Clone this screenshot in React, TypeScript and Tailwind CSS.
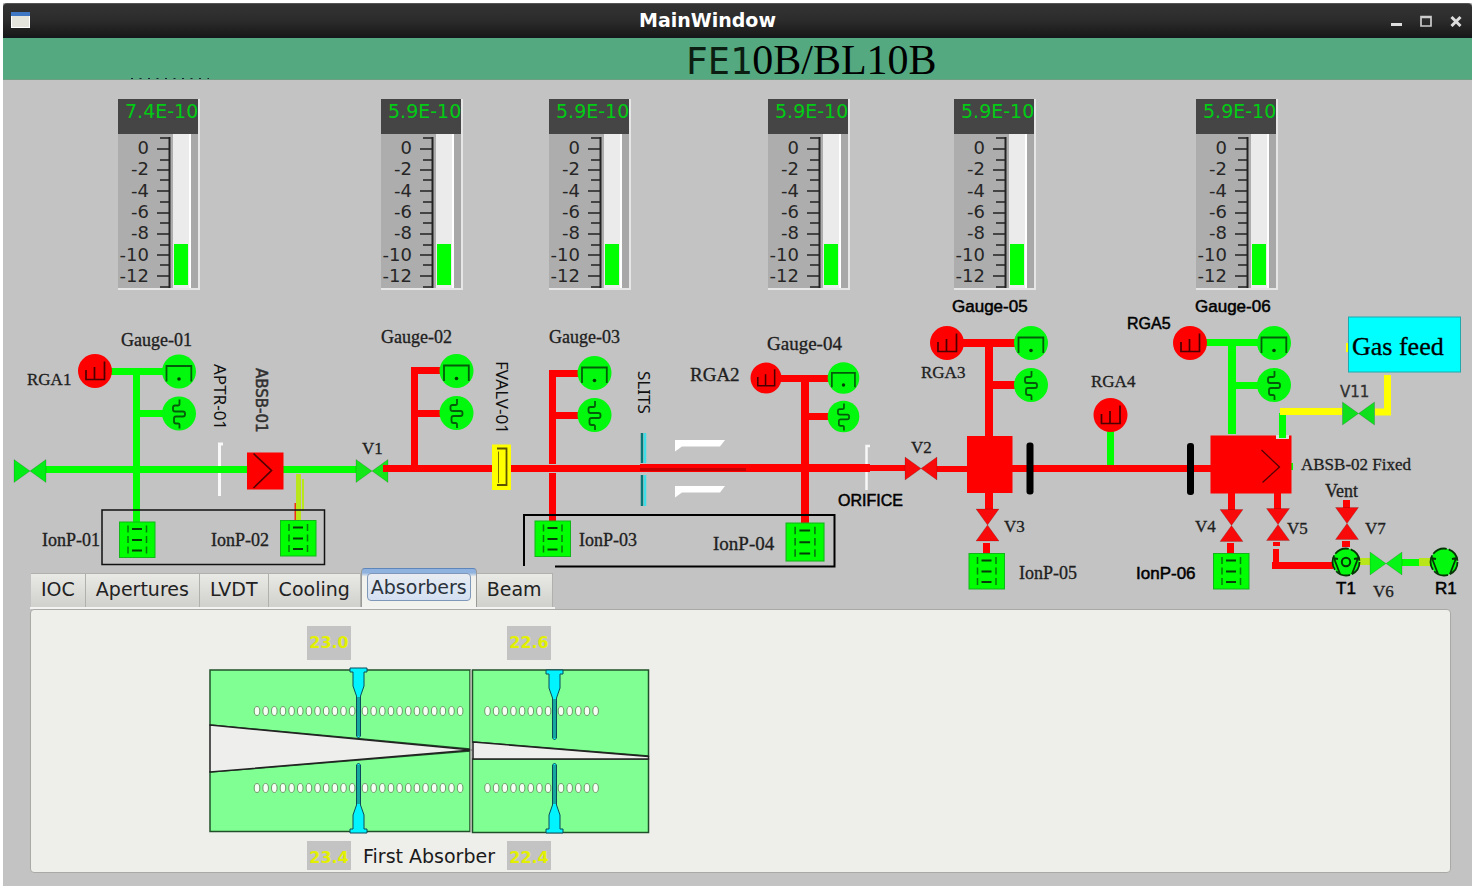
import { useState } from "react";

const RED = "#ff0000";
const GREEN = "#00ff00";
const YELLOW = "#ffff00";
const LIME = "#b9e61a";

const gauges = [
  { id: "Gauge-01", value: "7.4E-10", place: "left-[115px]" },
  { id: "Gauge-02", value: "5.9E-10", place: "left-[378px]" },
  { id: "Gauge-03", value: "5.9E-10", place: "left-[546px]" },
  { id: "Gauge-04", value: "5.9E-10", place: "left-[765px]" },
  { id: "Gauge-05", value: "5.9E-10", place: "left-[951px]" },
  { id: "Gauge-06", value: "5.9E-10", place: "left-[1193px]" },
];

const scale = ["0", "-2", "-4", "-6", "-8", "-10", "-12"];
const majorTicks = [15, 36, 57, 79, 100, 121, 142];
const minorTicks = [4, 26, 46, 68, 89, 111, 131, 153];

function Gauge({ value, place }: { value: string; place: string }) {
  return (
    <div className={`absolute top-[19px] w-[82px] border-r-2 border-b-2 border-[#e6e6e6] ${place}`}>
      <div className="h-[35px] bg-[#454545] pl-[7px] text-[19px] leading-[24px] text-[#00cc14] whitespace-nowrap">
        {value}
      </div>
      <div className="flex h-[154px] bg-[#adadad]">
        <div className="flex w-[31px] flex-col justify-between pt-[3px] pb-[2px] text-right text-[18px] leading-[21px] text-[#262626]">
          {scale.map((s) => (
            <span key={s} className="self-end whitespace-nowrap">{s}</span>
          ))}
        </div>
        <svg className="h-[154px] w-[24px] shrink-0" viewBox="0 0 24 154" stroke="#222" strokeWidth="2" fill="none" aria-hidden="true">
          <path d="M20.5 3V154" />
          <path d={majorTicks.map((y) => `M8 ${y}H20`).join("")} strokeWidth="1.7" />
          <path d={minorTicks.map((y) => `M11 ${y}H20`).join("")} strokeWidth="1.7" />
        </svg>
        <div className="flex w-[18px] flex-col justify-end border-r-2 border-white bg-[#ebebeb] px-px pb-[3px]">
          <div className="h-[41px] bg-[#00ff00]" />
        </div>
        <div className="flex-1 bg-[#a8a8a8]" />
      </div>
    </div>
  );
}

function Rga({ x, y, s = 1 }: { x: number; y: number; s?: number }) {
  return (
    <g transform={`translate(${x} ${y}) scale(${s})`}>
      <circle r="17" fill={RED} />
      <path d="M-9 -1V8.500H9.500V-9.500M-.5 -4V8" fill="none" stroke="#4a0000" strokeWidth="1.7" />
    </g>
  );
}

function ColdCathode({ x, y, s = 1 }: { x: number; y: number; s?: number }) {
  return (
    <g transform={`translate(${x} ${y}) scale(${s})`}>
      <circle r="17" fill="#02f80c" />
      <path d="M-12.500 10V-5.500H12.300V10" fill="none" stroke="#045c0a" strokeWidth="1.8" />
      <circle cy="7.500" r="1.800" fill="#033b06" />
    </g>
  );
}

function Pirani({ x, y, s = 1 }: { x: number; y: number; s?: number }) {
  return (
    <g transform={`translate(${x} ${y}) scale(${s})`}>
      <circle r="17" fill="#02f80c" />
      <path
        d="M.5 -14V-9.500Q.5 -8 -1 -8H-4Q-6 -8 -6 -6V-4Q-6 -2 -4 -2H4Q6 -2 6 0V1Q6 3 4 3H-3Q-5 3 -5 5V8Q-5 10 -3 10H-1Q.5 10 .5 11.500V15"
        fill="none"
        stroke="#045c0a"
        strokeWidth="1.8"
      />
    </g>
  );
}

function IonPump({ x, y, s = 1 }: { x: number; y: number; s?: number }) {
  return (
    <g transform={`translate(${x} ${y}) scale(${s})`}>
      <rect x=".5" y=".5" width="35.500" height="35.500" fill={GREEN} stroke="#12b51a" />
      <path d="M13 7.500H23M13 18.500H23M13 29H23" stroke="#053c08" strokeWidth="1.8" />
      <path d="M9 4V32M27.500 4V32" stroke="#077a0d" strokeWidth="1.500" strokeDasharray="7 3.500" />
    </g>
  );
}

function Valve({ x, y, color, upright = false }: { x: number; y: number; color: string; upright?: boolean }) {
  return (
    <g transform={`translate(${x} ${y})${upright ? " rotate(90)" : ""}`} fill={color} stroke="#000" strokeOpacity=".15">
      <path d="M-16 -11.500V11.500L0 0Z" />
      <path d="M16 -11.500V11.500L0 0Z" />
    </g>
  );
}

function Pump({ x, y, turbo = false }: { x: number; y: number; turbo?: boolean }) {
  return (
    <g transform={`translate(${x} ${y})`} stroke="#053405" fill="none" strokeWidth="1.8">
      <circle r="13.500" fill="#02f80c" strokeDasharray="15 2" />
      <path d="M-12.500 -5L-6 12M12.500 -5L6 12M-13 -4L-8 -3M13 -4L8 -3" />
      {turbo && <circle r="4.200" strokeWidth="2" />}
    </g>
  );
}

type Label = { t: string; x: number; y: number; c: string };

const serif18 = "font-['Liberation_Serif',serif] text-[18px] fill-[#202020] stroke-[#202020] stroke-[0.3px]";
const serif19 = "font-['Liberation_Serif',serif] text-[19px] fill-[#202020] stroke-[#202020] stroke-[0.3px]";
const serif17 = "font-['Liberation_Serif',serif] text-[17px] fill-[#202020] stroke-[#202020] stroke-[0.3px]";
const sans17 = "font-['Liberation_Sans',sans-serif] text-[17px] fill-black stroke-black stroke-[0.5px]";
const sans16 = "font-['Liberation_Sans',sans-serif] text-[16px] fill-black stroke-black stroke-[0.5px]";

const labels: Label[] = [
  { t: "Gauge-01", x: 121, y: 346, c: serif18 },
  { t: "RGA1", x: 27, y: 385, c: serif17 },
  { t: "Gauge-02", x: 381, y: 343, c: serif18 },
  { t: "Gauge-03", x: 549, y: 343, c: serif18 },
  { t: "Gauge-04", x: 767, y: 350, c: serif19 },
  { t: "RGA2", x: 690, y: 381, c: serif19 },
  { t: "RGA3", x: 921, y: 378, c: serif17 },
  { t: "RGA4", x: 1091, y: 387, c: serif17 },
  { t: "V1", x: 362, y: 454, c: serif17 },
  { t: "V2", x: 911, y: 453, c: serif17 },
  { t: "V3", x: 1004, y: 532, c: serif17 },
  { t: "V4", x: 1195, y: 532, c: serif17 },
  { t: "V5", x: 1287, y: 534, c: serif17 },
  { t: "V6", x: 1373, y: 597, c: serif17 },
  { t: "V7", x: 1365, y: 534, c: serif17 },
  { t: "Vent", x: 1325, y: 497, c: serif18 },
  { t: "ABSB-02 Fixed", x: 1301, y: 470, c: serif17 },
  { t: "IonP-01", x: 42, y: 546, c: serif18 },
  { t: "IonP-02", x: 211, y: 546, c: serif18 },
  { t: "IonP-03", x: 579, y: 546, c: serif18 },
  { t: "IonP-04", x: 713, y: 550, c: serif19 },
  { t: "IonP-05", x: 1019, y: 579, c: serif18 },
  { t: "Gas feed", x: 1352, y: 355, c: "font-['Liberation_Serif',serif] text-[26px] fill-black stroke-black stroke-[0.3px]" },
  { t: "V11", x: 1340, y: 397, c: "font-['DejaVu_Sans',sans-serif] text-[15px] fill-[#303030] stroke-[#303030] stroke-[0.3px]" },
  { t: "Gauge-05", x: 952, y: 312, c: sans17 },
  { t: "Gauge-06", x: 1195, y: 312, c: sans17 },
  { t: "RGA5", x: 1127, y: 329, c: sans16 },
  { t: "ORIFICE", x: 838, y: 506, c: sans16 },
  { t: "IonP-06", x: 1136, y: 579, c: sans17 },
  { t: "T1", x: 1336, y: 594, c: sans17 },
  { t: "R1", x: 1435, y: 594, c: sans17 },
];

const uprightLabels: Label[] = [
  { t: "APTR-01", x: 214, y: 364, c: "font-['Noto_Sans',sans-serif] text-[17px] fill-[#101010]" },
  { t: "ABSB-01", x: 256, y: 368, c: "font-['DejaVu_Sans',sans-serif] text-[15px] fill-[#303030] stroke-[#303030] stroke-[0.5px]" },
  { t: "FVALV-01", x: 496, y: 361, c: "font-['Noto_Sans',sans-serif] text-[17px] fill-[#101010]" },
  { t: "SLITS", x: 638, y: 371, c: "font-['Noto_Sans',sans-serif] text-[17px] fill-[#101010]" },
];

function Beamline() {
  return (
    <svg className="pointer-events-none absolute inset-0 size-full overflow-visible" role="img" aria-label="Beamline vacuum layout">
      <g transform="translate(-3 -80)">
        {/* slits and apertures behind the beam pipe */}
        <path d="M219.500 496V444H223" fill="none" stroke="#f8f8f8" strokeWidth="3" />
        <path d="M866.500 490V446H870" fill="none" stroke="#f8f8f8" strokeWidth="2.500" />
        <path d="M675 440H725L720 446.500H682L675 451.500ZM675 486H725L720 492.500H682L675 497.500Z" fill="#fff" />

        {/* front end */}
        <g fill={GREEN}>
          <rect x="45" y="466" width="203" height="7" />
          <rect x="283" y="466" width="74" height="7" />
          <rect x="133" y="368" width="7" height="155" />
          <rect x="110" y="368" width="54" height="7" />
          <rect x="140" y="410" width="24" height="7" />
        </g>
        <rect x="296" y="474" width="5" height="47" fill={LIME} />
        <rect x="302" y="479" width="2" height="32" fill={LIME} />
        <rect x="294.500" y="503" width="1.500" height="18" fill="#f03010" />
        <rect x="247" y="452.500" width="36.500" height="37" fill={RED} />
        <path d="M253.500 453.500L271.500 470.500L253.500 488" fill="none" stroke="#500" strokeWidth="1.700" />
        <Valve x={30} y={471} color="#04ec16" />
        <Valve x={372} y={471} color="#14e61a" />

        {/* main beam pipe */}
        <g fill={RED}>
          <rect x="383" y="465" width="258" height="7" />
          <rect x="640" y="464" width="230" height="8" />
          <rect x="869" y="465" width="36" height="6" />
          <rect x="937" y="466" width="31" height="6" />
          <rect x="1011" y="465" width="201" height="7" />
          <rect x="411" y="367" width="7" height="100" />
          <rect x="411" y="367" width="31" height="7" />
          <rect x="417" y="410" width="25" height="7" />
          <rect x="549" y="370" width="7" height="94" />
          <rect x="549" y="473" width="7" height="49" />
          <rect x="549" y="370" width="31" height="7" />
          <rect x="555" y="412" width="25" height="7" />
          <rect x="780" y="375" width="50" height="7" />
          <rect x="801" y="375" width="8" height="148" />
          <rect x="808" y="413" width="22" height="7" />
          <rect x="962" y="339" width="54" height="8" />
          <rect x="985" y="340" width="8" height="170" />
          <rect x="992" y="381" width="24" height="8" />
          <rect x="967" y="436" width="45.500" height="57" />
          <rect x="983" y="543" width="7" height="11" />
        </g>
        <rect x="640" y="468" width="106" height="3" fill="#c40000" />

        <rect x="492" y="444.500" width="19" height="45.500" fill={YELLOW} />
        <path d="M497 448.500H506.500V485H497" fill="none" stroke="#5c5400" strokeWidth="1.800" />
        <path d="M498.500 451.500V483" stroke="#7c7400" strokeWidth="1" />
        <path d="M642 433V463M642 475V506" stroke="#067878" strokeWidth="2.500" />
        <path d="M645 433V463M645 475V506" stroke="#3fdfe8" strokeWidth="2.500" />

        {/* end station */}
        <g fill={GREEN}>
          <rect x="1107" y="430" width="7" height="35" />
          <rect x="1205" y="339" width="54" height="7" />
          <rect x="1228" y="340" width="8" height="94" />
          <rect x="1235" y="382" width="24" height="7" />
          <rect x="1291" y="463" width="2" height="7" />
          <rect x="1402" y="559" width="18" height="7" />
        </g>
        <g fill={RED}>
          <rect x="1210.500" y="435.500" width="81" height="58" />
          <rect x="1228" y="493" width="7" height="17" />
          <rect x="1227" y="543" width="7" height="11" />
          <rect x="1274" y="493" width="7" height="16" />
          <rect x="1273" y="542" width="7" height="4" />
          <rect x="1273" y="549" width="6" height="16" />
          <rect x="1272" y="562" width="61" height="7" />
          <rect x="1343" y="500" width="7" height="8" />
          <rect x="1342" y="541" width="8" height="6" />
        </g>
        <rect x="1276" y="435" width="13" height="4" fill="#dcdcdc" />
        <rect x="1279" y="413" width="7" height="25" fill={GREEN} />
        <path d="M1280 411.500H1342M1375 412H1387.500V375" fill="none" stroke={YELLOW} strokeWidth="7" />
        <path d="M1261.500 450L1279.500 467L1262.500 482.500" fill="none" stroke="#500" strokeWidth="1.300" />
        <rect x="1026.500" y="442.500" width="7" height="52" rx="3" />
        <rect x="1187" y="443" width="7" height="52" rx="3" />
        <rect x="1346" y="343" width="2" height="9" fill={YELLOW} />
        <rect x="1348.500" y="317" width="112" height="55" fill="#00ffff" stroke="#1fa9ad" />
        <rect x="1358" y="558" width="12" height="7" fill={LIME} />
        <rect x="1419" y="558" width="14" height="8" fill={LIME} />

        <Valve x={921} y={468.5} color="#f80a0a" />
        <Valve x={1358.5} y={413.5} color="#0ee01e" />
        <Valve x={1386} y={563.5} color="#06f416" />
        <Valve x={987.5} y={525} color="#f80a0a" upright />
        <Valve x={1231.5} y={525.5} color="#f80a0a" upright />
        <Valve x={1278} y={524.5} color="#f80a0a" upright />
        <Valve x={1347} y={523.5} color="#f80a0a" upright />
        <Pump x={1346} y={562} turbo />
        <Pump x={1444} y={562} />

        <Rga x={95} y={371} />
        <Rga x={766} y={378} s={0.91} />
        <Rga x={947} y={343} />
        <Rga x={1110.5} y={415} />
        <Rga x={1190} y={343} />
        <ColdCathode x={179} y={371.5} />
        <Pirani x={179} y={413.5} />
        <ColdCathode x={456.5} y={371} />
        <Pirani x={456.5} y={413} />
        <ColdCathode x={594.5} y={373} />
        <Pirani x={594.5} y={415} />
        <ColdCathode x={843.5} y={378} s={0.93} />
        <Pirani x={843.5} y={416.5} s={0.93} />
        <ColdCathode x={1031} y={343} />
        <Pirani x={1031} y={385} />
        <ColdCathode x={1274} y={343} />
        <Pirani x={1274} y={385} />

        <IonPump x={119} y={521.5} />
        <IonPump x={280} y={520} />
        <IonPump x={534.5} y={520.5} />
        <IonPump x={785.5} y={522.5} s={1.07} />
        <IonPump x={968.5} y={553} />
        <IonPump x={1213} y={553} />

        <rect x="102" y="510" width="222.500" height="54.500" fill="none" stroke="#111" strokeWidth="1.500" />
        <path d="M524 566V515H834.500V566.500H555" fill="none" stroke="#000" strokeWidth="2" />

        {labels.map((l) => (
          <text key={l.t} x={l.x} y={l.y} className={l.c}>{l.t}</text>
        ))}
        {uprightLabels.map((l) => (
          <text key={l.t} transform={`translate(${l.x} ${l.y}) rotate(90)`} className={l.c}>{l.t}</text>
        ))}
      </g>
    </svg>
  );
}

const tabs = ["IOC", "Apertures", "LVDT", "Cooling", "Absorbers", "Beam"];

const tabBase = "border-t border-r text-[19px]";
const tabIdle = "h-[34px] px-[10px] pb-[3px] border-[#b0b0ac] bg-linear-to-b from-[#e9e9e6] to-[#d0d0cd] text-[#222]";
const tabActive = "h-[39px] rounded-t border-l border-[#9a9a98] border-t-[#5f86ba] bg-linear-to-b from-[#8fb2de] from-10% to-[#f1f1ee] to-20% px-[5px] pb-[2px] text-[#2b333c]";

function Reading({ value, low = false }: { value: string; low?: boolean }) {
  return (
    <output
      className={`block w-[44px] overflow-hidden bg-[#c3c3c3] text-center text-[16px] font-bold text-[#e2f000] ${low ? "h-[29px] leading-[33px]" : "h-[34px] leading-[34px]"}`}
    >
      {value}
    </output>
  );
}

const NEEDLE = "M-8.500 0H8.500V4H5.500V18L2 28V68L0 70L-2 68V28L-5.500 18V4H-8.500Z";

const holes = [
  { start: 48, count: 12 },
  { start: 156, count: 12 },
  { start: 278.5, count: 8 },
  { start: 352, count: 5 },
].flatMap(({ start, count }) => Array.from({ length: count }, (_, i) => start + i * 8.65));

function Absorber() {
  return (
    <svg className="h-[168px] w-[442px]" viewBox="0 0 442 168" role="img" aria-label="Absorber cross section">
      <g fill="#80ff92" stroke="#20502a" strokeWidth="1.500">
        <path d="M1 3H261V82L1 58Z" />
        <path d="M1 105L261 84V164.500H1Z" />
        <path d="M263.500 3H439.500V89L263.500 75Z" />
        <path d="M263.500 92H439.500V165.500H263.500Z" />
      </g>
      <g fill="#eeeeec" stroke="#222" strokeWidth="1.500">
        <path d="M1 58L263 83L1 105Z" />
        <path d="M264 75L439.500 89.500V92H264Z" />
      </g>
      <path d="M262 3V165" stroke="#a9b0a4" strokeWidth="1.500" />
      <g fill="#f6fff4" stroke="#6e9a6a" strokeWidth="1">
        {[44, 121].map((y) => holes.map((x) => <ellipse key={`${x}-${y}`} cx={x} cy={y} rx="2.800" ry="4.500" />))}
      </g>
      <g fill="#00f4ff" stroke="#0a4a5c" strokeWidth="1">
        <path d={NEEDLE} transform="translate(149.500 1)" />
        <path d={NEEDLE} transform="translate(345.500 3)" />
        <path d={NEEDLE} transform="translate(149.500 166) scale(1 -1)" />
        <path d={NEEDLE} transform="translate(345.500 166) scale(1 -1)" />
      </g>
      <path d="M149.500 30V69M345.500 32V71M149.500 98V137M345.500 98V137" stroke="#14a79e" strokeWidth="3" />
    </svg>
  );
}

export default function App() {
  const [active, setActive] = useState("Absorbers");
  return (
    <div className="flex min-h-screen flex-col border-t-[3px] border-l-[3px] border-white bg-[#c3c3c3] font-['DejaVu_Sans',sans-serif] text-black">
      <header>
        <div className="flex h-[35px] items-center rounded-t border-t border-b-2 border-t-[#555] border-b-[#15181d] bg-linear-to-b from-[#333] via-[#2c2c2c] to-[#191919] pr-[9px] pl-2">
          <svg className="h-4 w-[19px]" viewBox="0 0 19 16" aria-hidden="true">
            <rect x=".5" y=".5" width="18" height="15" fill="#e4e4dc" stroke="#fff" />
            <rect width="19" height="4" fill="#3f77c4" />
          </svg>
          <h1 className="flex-1 pr-1 text-center text-[19px] leading-[30px] font-bold text-white">MainWindow</h1>
          <div className="flex items-center justify-end gap-[16px]">
            <button aria-label="Minimize" className="flex size-[14px] items-center justify-center">
              <svg className="size-[14px]" viewBox="0 0 14 14"><path d="M2 11.500H13" stroke="#ddd" strokeWidth="3" /></svg>
            </button>
            <button aria-label="Maximize" className="flex size-[14px] items-center justify-center">
              <svg className="size-[14px]" viewBox="0 0 14 14"><path d="M2 3.500H12V13H2ZM2 4.500H12" fill="none" stroke="#ccc" strokeWidth="1.700" /></svg>
            </button>
            <button aria-label="Close" className="flex size-[14px] items-center justify-center">
              <svg className="size-[14px]" viewBox="0 0 14 14"><path d="M2.500 4L11.500 13M11.500 4L2.500 13" stroke="#ddd" strokeWidth="3" /></svg>
            </button>
          </div>
        </div>
        <div className="relative flex h-[42px] items-center justify-center border-b border-[#6d9f82] bg-[#54a980]">
          <h2 className="flex items-baseline pt-[4px] pl-[147px] leading-[42px]">
            <span className="font-['DejaVu_Sans_Mono',monospace] text-[37px] text-[#0c1e12]">FE1</span>
            <span className="font-['Liberation_Serif',serif] text-[42px]">0B/BL10B</span>
          </h2>
          <svg className="absolute bottom-0 left-[128px] h-px w-[78px]" aria-hidden="true">
            <path d="M0 .5H78" stroke="#123" strokeDasharray="2 6.500" />
          </svg>
        </div>
      </header>

      <section className="relative h-[488px]" aria-label="Vacuum overview">
        {gauges.map((g) => (
          <Gauge key={g.id} value={g.value} place={g.place} />
        ))}
        <Beamline />
      </section>

      <section className="flex flex-1 flex-col pr-[21px] pb-[15px] pl-[27px]">
        <div role="tablist" className="flex h-[39px] items-end self-start pl-px">
          {tabs.map((t) => (
            <button
              key={t}
              role="tab"
              aria-selected={active === t}
              onClick={() => setActive(t)}
              className={`${tabBase} ${active === t ? tabActive : tabIdle}`}
            >
              {active === t ? (
                <span className="block rounded-sm border border-[#7f97b8] bg-linear-to-b from-[#e9edf2] to-[#d3e0f2] px-[3px] leading-[26px]">{t}</span>
              ) : (
                t
              )}
            </button>
          ))}
        </div>
        <div className="w-[525px] border-t-2 border-[#f4f4f2]" />
        <div role="tabpanel" aria-label={active} className="flex-1 rounded border border-[#a9a9a6] bg-[#eeeeea] pt-[16px] pl-[178px]">
          <div className="flex gap-[156px] pl-[98px]">
            <Reading value="23.0" />
            <Reading value="22.6" />
          </div>
          <div className="pt-[7px] pb-[6px]">
            <Absorber />
          </div>
          <div className="flex pl-[98px]">
            <Reading value="23.4" low />
            <span className="w-[156px] text-center text-[19px] leading-[31px] text-[#1a1a1a]">First Absorber</span>
            <Reading value="22.4" low />
          </div>
        </div>
      </section>
    </div>
  );
}
